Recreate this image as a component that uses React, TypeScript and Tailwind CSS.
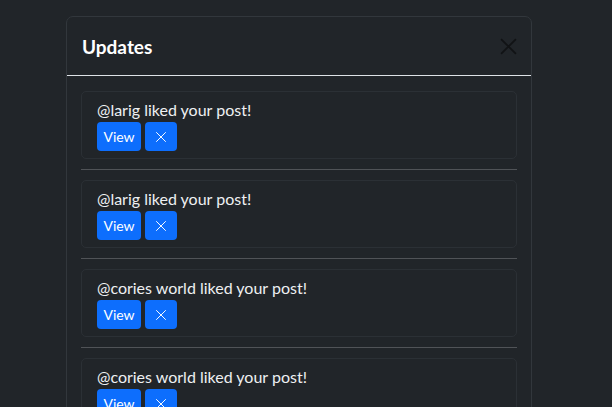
import { X } from "lucide-react";

const updates = [
  { id: 1, user: "larig" },
  { id: 2, user: "larig" },
  { id: 3, user: "cories world" },
  { id: 4, user: "cories world" },
  { id: 5, user: "cories world" },
];

export default function App() {
  return (
    <div className="h-[407px] overflow-hidden bg-[#212529] font-['Lato','Liberation_Sans',sans-serif] text-[#eef0f2]">
      <div className="ml-[66px] mt-[16px] w-[466px] rounded-[7px] border border-[#32373c] bg-[#212529]">
        {/* Header */}
        <div className="flex h-[59px] items-center justify-between border-b border-[#dee2e6] pl-[15px] pr-[11px]">
          <h5 className="text-[19px] font-bold leading-none text-white">Updates</h5>
          <button className="flex h-[24px] w-[24px] items-center justify-center text-[#111315]">
            <svg width="17" height="17" viewBox="0 0 16 16" fill="none" stroke="currentColor" strokeWidth="1.7">
              <path d="M1 1 15 15M15 1 1 15" />
            </svg>
          </button>
        </div>

        {/* Body */}
        <div className="px-[14px] pt-[15px]">
          {updates.map((u, i) => (
            <div key={u.id}>
              <div className="rounded-[5px] border border-[#2b3035] px-[15px] pb-[7px] pt-[6px]">
                <p className="text-[16px] leading-[24px]">@{u.user} liked your post!</p>
                <div className="flex gap-[4px]">
                  <button className="h-[29px] w-[44px] rounded-[4px] bg-[#0d6efd] text-[14px] text-white">View</button>
                  <button className="flex h-[29px] w-[32px] items-center justify-center rounded-[4px] bg-[#0d6efd] text-white">
                    <X size={18} strokeWidth={1.3} />
                  </button>
                </div>
              </div>
              {i < updates.length - 1 && <hr className="my-[10px] border-t border-[#505357]" />}
            </div>
          ))}
        </div>
      </div>
    </div>
  );
}
